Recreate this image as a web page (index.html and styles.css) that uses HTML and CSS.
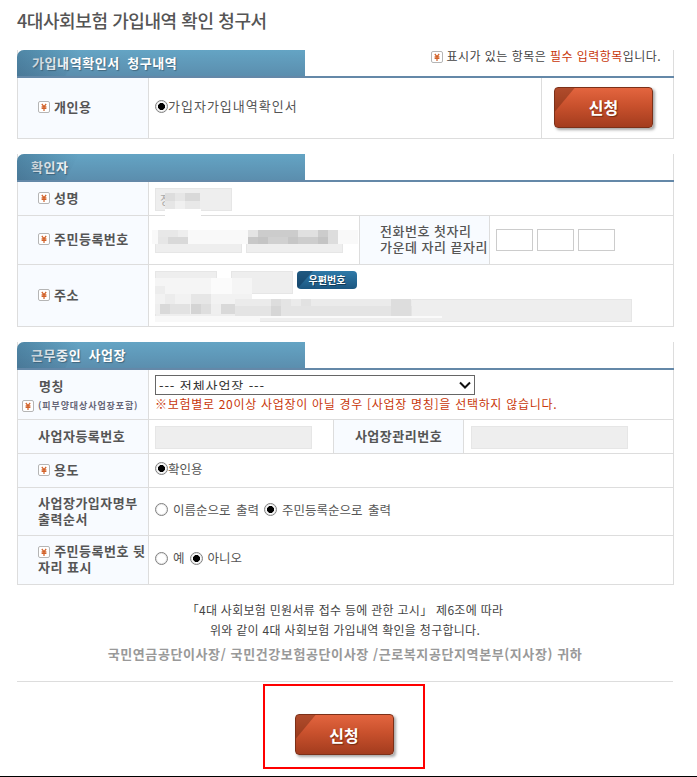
FILE: index.html
```html
<!DOCTYPE html>
<html lang="ko">
<head>
<meta charset="utf-8">
<title>4대사회보험 가입내역 확인 청구서</title>
<link rel="stylesheet" href="styles.css">
</head>
<body>
<svg width="0" height="0" class="defs" aria-hidden="true">
  <symbol id="req" viewBox="0 0 12 12">
    <rect x="0.5" y="0.5" width="11" height="11" rx="1.5" fill="#fff" stroke="#b5b5b5"/>
    <path d="M3.8 3l2.2 2.6L8.2 3M3.6 5.8h4.8M3.6 7.4h4.8M6 5.5V10" fill="none" stroke="#d2622a" stroke-width="1.2"/>
  </symbol>
</svg>
<div class="page">
  <h1 class="title">4대사회보험 가입내역 확인 청구서</h1>

  <section class="sec">
    <div class="sechead">
      <h2 class="tab tab-first">가입내역확인서 청구내역</h2>
      <p class="note"><svg class="req"><use href="#req"/></svg> 표시가 있는 항목은 <em>필수 입력항목</em>입니다.</p>
    </div>
    <div class="row h61">
      <div class="th"><svg class="req"><use href="#req"/></svg><span>개인용</span></div>
      <div class="td grow up"><label class="opt"><input class="radio" type="radio" checked>가입자가입내역확인서</label></div>
      <div class="td btncell"><button class="btn" type="button">신청</button></div>
    </div>
  </section>

  <section class="sec">
    <div class="sechead"><h2 class="tab">확인자</h2></div>
    <div class="row h34">
      <div class="th"><svg class="req"><use href="#req"/></svg><span>성명</span></div>
      <div class="td grow lo"><div class="field w77">정</div></div>
    </div>
    <div class="row h49">
      <div class="th"><svg class="req"><use href="#req"/></svg><span>주민등록번호</span></div>
      <div class="td idcell"><div class="field w87"></div><div class="field w97"></div></div>
      <div class="th phone">전화번호 첫자리<br>가운데 자리 끝자리</div>
      <div class="td grow phones"><input class="tel" type="text"><input class="tel" type="text"><input class="tel" type="text"></div>
    </div>
    <div class="row h62">
      <div class="th"><svg class="req"><use href="#req"/></svg><span>주소</span></div>
      <div class="td grow stack lo">
        <div class="zip"><div class="field w62">000</div><div class="field w62">50</div><button class="zipbtn" type="button">우편번호</button></div>
        <div class="field w477"></div>
      </div>
    </div>
  </section>

  <section class="sec">
    <div class="sechead"><h2 class="tab">근무중인 사업장</h2></div>
    <div class="row h50">
      <div class="th col">
        <span class="nm">명칭</span>
        <span class="sub"><svg class="req"><use href="#req"/></svg><small>(피부양대상사업장포함)</small></span>
      </div>
      <div class="td grow stack sel">
        <select class="select"><option>--- 전체사업장 ---</option></select>
        <p class="warn">※보험별로 20이상 사업장이 아닐 경우 [사업장 명칭]을 선택하지 않습니다.</p>
      </div>
    </div>
    <div class="row h34">
      <div class="th"><span>사업자등록번호</span></div>
      <div class="td biz lo"><div class="field w157"></div></div>
      <div class="th center"><span>사업장관리번호</span></div>
      <div class="td grow lo pad7"><div class="field w157"></div></div>
    </div>
    <div class="row h34">
      <div class="th"><svg class="req"><use href="#req"/></svg><span>용도</span></div>
      <div class="td grow up"><label class="opt tight"><input class="radio" type="radio" checked>확인용</label></div>
    </div>
    <div class="row h48">
      <div class="th"><span>사업장가입자명부<br>출력순서</span></div>
      <div class="td grow up">
        <label class="opt gap tight"><input class="radio" type="radio">이름순으로 출력</label>
        <label class="opt gap tight"><input class="radio" type="radio" checked>주민등록순으로 출력</label>
      </div>
    </div>
    <div class="row h49">
      <div class="th wide"><span><svg class="req inl"><use href="#req"/></svg> 주민등록번호 뒷<br>자리 표시</span></div>
      <div class="td grow up">
        <label class="opt gap tight"><input class="radio" type="radio">예</label>
        <label class="opt gap tight"><input class="radio" type="radio" checked>아니오</label>
      </div>
    </div>
  </section>

  <div class="notice">
    <p>「4대 사회보험 민원서류 접수 등에 관한 고시」 제6조에 따라</p>
    <p>위와 같이 4대 사회보험 가입내역 확인을 청구합니다.</p>
    <p class="to">국민연금공단이사장/ 국민건강보험공단이사장 /근로복지공단지역본부(지사장) 귀하</p>
  </div>
  <div class="submit"><div class="mark"><button class="btn" type="button">신청</button></div></div>

  <svg class="mosaic" width="697" height="777" viewBox="0 0 697 777" aria-hidden="true">
    <g fill="#fff"><rect x="165" y="209" width="36" height="8"/></g>
    <rect x="165" y="193" width="10" height="8" fill="#ddd"/><rect x="175" y="193" width="10" height="8" fill="#e6e6e6"/><rect x="185" y="193" width="15" height="8" fill="#d9d9d9"/>
    <rect x="165" y="201" width="10" height="8" fill="#e6e6e6"/><rect x="175" y="201" width="10" height="8" fill="#f0f0f0"/><rect x="185" y="201" width="15" height="8" fill="#e8e8e8"/>

    <rect x="152" y="230" width="206" height="14" fill="#f9f9f9"/>
    <rect x="158" y="230" width="20" height="7" fill="#e8e8e8"/><rect x="178" y="230" width="10" height="7" fill="#eee"/>
    <rect x="158" y="237" width="10" height="7" fill="#e6e6e6"/><rect x="168" y="237" width="20" height="7" fill="#d9d9d9"/>
    <rect x="248" y="230" width="10" height="7" fill="#e4e4e4"/><rect x="258" y="230" width="40" height="7" fill="#ccc"/><rect x="298" y="230" width="20" height="7" fill="#e0e0e0"/><rect x="318" y="230" width="10" height="7" fill="#ccc"/><rect x="328" y="230" width="10" height="7" fill="#ddd"/>
    <rect x="248" y="237" width="10" height="7" fill="#c8c8c8"/><rect x="258" y="237" width="10" height="7" fill="#c4c4c4"/><rect x="268" y="237" width="20" height="7" fill="#d0d0d0"/><rect x="288" y="237" width="10" height="7" fill="#c6c6c6"/><rect x="298" y="237" width="20" height="7" fill="#cdcdcd"/><rect x="318" y="237" width="10" height="7" fill="#c4c4c4"/><rect x="328" y="237" width="10" height="7" fill="#ddd"/>

    <rect x="155" y="278" width="97" height="16" fill="#f5f5f5"/><rect x="211" y="278" width="21" height="16" fill="#fbfbfb"/>
    <rect x="155" y="286" width="10" height="8" fill="#ededed"/>
    <rect x="155" y="294" width="97" height="10" fill="#f2f2f2"/><rect x="165" y="294" width="10" height="10" fill="#ececec"/><rect x="191" y="294" width="20" height="10" fill="#e6e6e6"/>
    <rect x="155" y="304" width="80" height="10" fill="#efefef"/><rect x="160" y="304" width="10" height="10" fill="#d9d9d9"/><rect x="170" y="304" width="20" height="10" fill="#e2e2e2"/><rect x="191" y="304" width="10" height="10" fill="#d4d4d4"/><rect x="201" y="304" width="10" height="10" fill="#dedede"/><rect x="221" y="304" width="14" height="10" fill="#d9d9d9"/>
    <rect x="235" y="299" width="177" height="7" fill="#ebebeb"/><rect x="271" y="299" width="10" height="7" fill="#ddd"/><rect x="281" y="299" width="10" height="7" fill="#e4e4e4"/><rect x="301" y="299" width="10" height="7" fill="#e2e2e2"/>
    <rect x="235" y="306" width="177" height="10" fill="#e4e4e4"/><rect x="271" y="306" width="10" height="10" fill="#d6d6d6"/><rect x="391" y="299" width="20" height="17" fill="#ddd"/>
    <rect x="155" y="316" width="105" height="6" fill="#f8f8f8"/><rect x="260" y="316" width="182" height="2" fill="#fafafa"/>
  </svg>
</div>
</body>
</html>
```

FILE: styles.css
```css
* { box-sizing: border-box; }
html, body { margin: 0; padding: 0; background: #fff; }
body { font-family: "Noto Sans CJK KR", "Noto Sans", sans-serif; font-size: 13px; color: #555; }
.defs { position: absolute; }
.page { position: relative; width: 697px; height: 777px; padding: 0 23px 0 17px; border-bottom: 1px solid #000; overflow: hidden; }
.title { margin: 0; height: 50px; padding-top: 7px; font-size: 18px; line-height: 26px; font-weight: 500; color: #555; letter-spacing: -.42px; }
.sec { margin-bottom: 15px; border-right: 1px solid #ddd; border-left: 1px solid #ddd; }
.sechead { display: flex; height: 28px; margin: 0 -1px; border-bottom: 2px solid #6488a8; }
.tab { position: relative; margin: 0; width: 288px; height: 26px; padding-left: 14px; overflow: hidden; border-radius: 7px 0 0 0; background: linear-gradient(#64a4c4, #5b8eae); color: #fff; font-size: 13px; line-height: 25px; font-weight: 700; letter-spacing: .6px; word-spacing: 3px; text-shadow: 1px 1px 1px rgba(0, 0, 0, .3); }
.tab::before { content: ""; position: absolute; inset: 0 auto 0 0; width: 62px; background: linear-gradient(90deg, rgba(40, 80, 110, .35), rgba(40, 80, 110, 0)); clip-path: polygon(0 0, 100% 0, 78% 100%, 0 100%); }
.tab-first { padding-left: 15px; }
.note { margin: -3px 13px 0 auto; font-size: 12px; line-height: 18px; color: #444; letter-spacing: .45px; white-space: nowrap; }
.note em { font-style: normal; color: #c8370a; }
.note .req { vertical-align: -2px; }
.req { width: 12px; height: 12px; flex: none; }
.row { display: flex; border-bottom: 1px solid #ddd; }
.h61 { height: 61px; } .h34 { height: 34px; } .h49 { height: 49px; } .h62 { height: 62px; } .h50 { height: 50px; } .h48 { height: 48px; }
.th { display: flex; align-items: center; gap: 4px; width: 131px; flex: none; padding-left: 20px; padding-bottom: 2px; border-right: 1px solid #ddd; background: #f8fbff; font-weight: 700; line-height: 16px; letter-spacing: .5px; color: #555; }
.th.col { flex-direction: column; align-items: flex-start; gap: 6px; justify-content: center; padding-left: 4px; padding-bottom: 0; }
.nm { padding-left: 17px; }
.sub { display: flex; align-items: center; gap: 4px; }
.sub small { font-size: 9px; line-height: 12px; font-weight: 700; letter-spacing: .9px; color: #667; white-space: nowrap; }
.th.wide { padding-right: 0; white-space: nowrap; }
.inl { vertical-align: -2px; }
.th.phone { display: block; width: 131px; flex: none; padding: 7px 0 0 20px; border-left: 1px solid #ddd; text-align: left; font-weight: 500; color: #555; white-space: nowrap; }
.th.center { justify-content: center; padding-left: 0; border-left: 1px solid #ddd; }
.td { display: flex; align-items: center; padding-left: 6px; }
.grow { flex: 1; min-width: 0; }
.up { padding-bottom: 4px; }
.lo { padding-top: 2px; }
.pad7 { padding-left: 7px; }
.btncell { width: 132px; flex: none; border-left: 1px solid #ddd; padding-left: 12px; padding-bottom: 2px; }
.btn { position: relative; width: 99px; height: 41px; padding: 0; overflow: hidden; border: 1px solid #7c3018; border-radius: 4px; background: linear-gradient(#e3653f, #c9512d 45%, #a33c1e); box-shadow: 2px 2px 3px rgba(0, 0, 0, .35); color: #fff; font-family: inherit; font-size: 16px; font-weight: 700; text-shadow: 1px 1px 1px rgba(60, 20, 0, .55); }
.btn::before { content: ""; position: absolute; inset: 0 auto 0 0; width: 20px; height: 24px; background: rgba(80, 30, 10, .35); clip-path: polygon(0 0, 100% 0, 0 100%); }
.opt { display: inline-flex; align-items: center; line-height: 16px; letter-spacing: 1px; color: #555; white-space: nowrap; }
.opt.tight { font-size: 12.5px; letter-spacing: 0; word-spacing: 2px; }
.opt.gap { margin-right: 5px; }
.opt.gap .radio { margin-right: 5px; }
.radio { appearance: none; width: 13px; height: 13px; margin: 0; flex: none; border: 1px solid #808080; border-radius: 50%; background: #fff; box-shadow: inset 0 0 0 1px #e8e8e8; }
.radio:checked { background: radial-gradient(circle, #000 0 3.2px, #fff 3.8px); }
.field { height: 23px; border: 1px solid #e6e6e6; background: #eee; color: #aaa; font-size: 12px; line-height: 21px; padding-left: 4px; }
.w77 { width: 77px; } .w87 { width: 87px; } .w97 { width: 97px; } .w62 { width: 62px; } .w477 { width: 477px; } .w157 { width: 157px; }
.idcell { width: 210px; flex: none; gap: 4px; padding-top: 3px; }
.phones { gap: 4px; padding-left: 6px; padding-right: 0; }
.tel { width: 37px; height: 22px; margin: 0; padding: 0; border: 1px solid #ccc; background: #fff; }
.stack { flex-direction: column; align-items: flex-start; justify-content: center; gap: 5px; }
.zip { display: flex; gap: 14px; align-items: flex-start; }
.zipbtn { position: relative; width: 60px; height: 18px; margin-left: -10px; padding: 0; overflow: hidden; border: 0; border-radius: 4px; background: linear-gradient(#2f7aa8, #1b5680); color: #fff; font-family: inherit; font-size: 10px; line-height: 18px; font-weight: 700; text-shadow: 1px 1px 0 rgba(0, 0, 0, .4); }
.zipbtn::before { content: ""; position: absolute; inset: 0 auto 0 0; width: 16px; background: rgba(10, 40, 70, .4); clip-path: polygon(0 0, 100% 0, 0 100%); }
.sel { gap: 0; padding-bottom: 2px; }
.select { appearance: none; width: 320px; height: 20px; padding: 0 0 4px 3px; border: 1px solid #666; border-radius: 0; background: #fff url("data:image/svg+xml,%3Csvg xmlns='http://www.w3.org/2000/svg' width='12' height='8'%3E%3Cpath d='M1 1.5l5 5 5-5' fill='none' stroke='%23111' stroke-width='2'/%3E%3C/svg%3E") no-repeat right 3px center; color: #333; font-family: inherit; font-size: 13px; letter-spacing: .9px; }
.warn { margin: 0; font-size: 12px; line-height: 18px; color: #c8370a; letter-spacing: .7px; white-space: nowrap; }
.biz { width: 184px; flex: none; }
.notice { height: 82px; margin-top: 15px; text-align: center; font-size: 12px; line-height: 20px; color: #444; letter-spacing: .28px; margin-right: 1px; border-bottom: 1px solid #ddd; }
.notice p { margin: 0; }
.notice .to { margin-top: 4px; font-size: 13px; font-weight: 700; color: #999; letter-spacing: .6px; white-space: nowrap; }
.submit { display: flex; justify-content: center; padding-top: 2px; padding-right: 3px; }
.mark { display: flex; justify-content: center; width: 162px; height: 85px; padding-top: 28px; border: 2px solid #f00; }
.mosaic { position: absolute; top: 0; left: 0; pointer-events: none; }
```
